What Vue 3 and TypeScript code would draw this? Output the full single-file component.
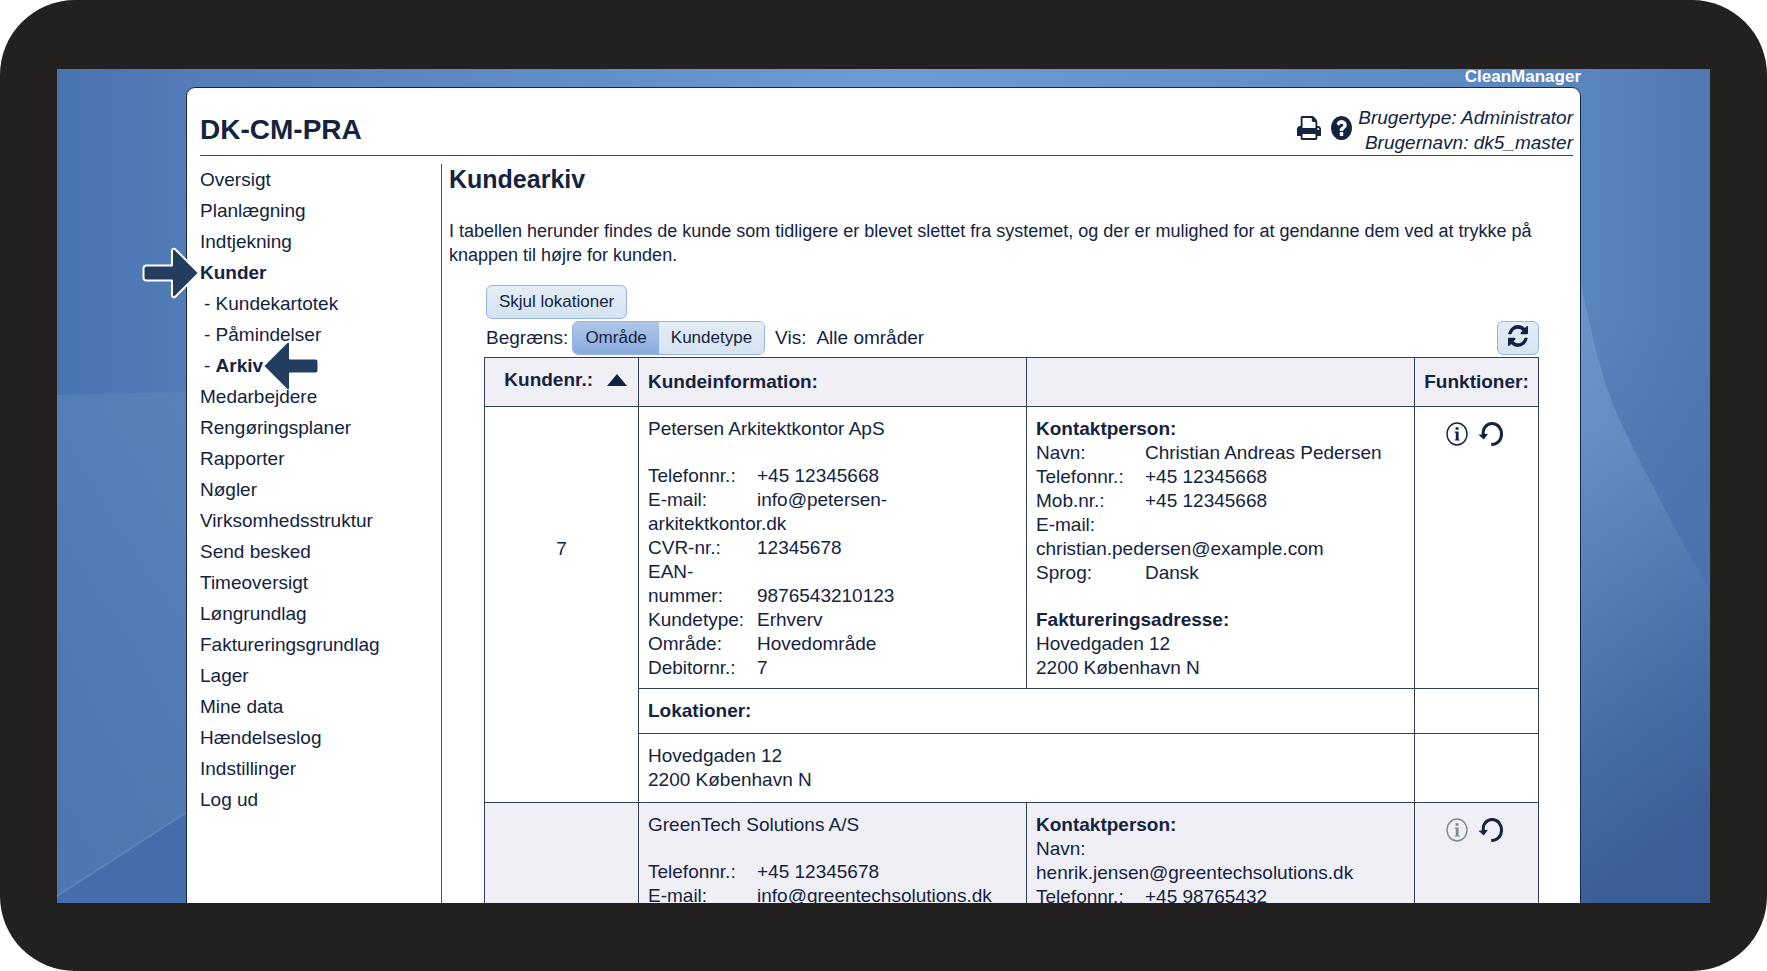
<script setup lang="ts">
import { ref } from 'vue'

interface NavItem {
  label: string
  sub?: boolean
  active?: boolean
  pointer?: 'left' | 'right'
}

interface Field {
  label: string
  value: string
}

interface Customer {
  id: string
  name: string
  info: Field[]
  contact: Field[]
  billing: string[]
  locations: string[]
  infoMuted: boolean
}

const nav: NavItem[] = [
  { label: 'Oversigt' },
  { label: 'Planlægning' },
  { label: 'Indtjekning' },
  { label: 'Kunder', active: true, pointer: 'right' },
  { label: 'Kundekartotek', sub: true },
  { label: 'Påmindelser', sub: true },
  { label: 'Arkiv', sub: true, active: true, pointer: 'left' },
  { label: 'Medarbejdere' },
  { label: 'Rengøringsplaner' },
  { label: 'Rapporter' },
  { label: 'Nøgler' },
  { label: 'Virksomhedsstruktur' },
  { label: 'Send besked' },
  { label: 'Timeoversigt' },
  { label: 'Løngrundlag' },
  { label: 'Faktureringsgrundlag' },
  { label: 'Lager' },
  { label: 'Mine data' },
  { label: 'Hændelseslog' },
  { label: 'Indstillinger' },
  { label: 'Log ud' },
]

const customers: Customer[] = [
  {
    id: '7',
    name: 'Petersen Arkitektkontor ApS',
    info: [
      { label: 'Telefonnr.:', value: '+45 12345668' },
      { label: 'E-mail:', value: 'info@petersen-arkitektkontor.dk' },
      { label: 'CVR-nr.:', value: '12345678' },
      { label: 'EAN-nummer:', value: '9876543210123' },
      { label: 'Kundetype:', value: 'Erhverv' },
      { label: 'Område:', value: 'Hovedområde' },
      { label: 'Debitornr.:', value: '7' },
    ],
    contact: [
      { label: 'Navn:', value: 'Christian Andreas Pedersen' },
      { label: 'Telefonnr.:', value: '+45 12345668' },
      { label: 'Mob.nr.:', value: '+45 12345668' },
      { label: 'E-mail:', value: 'christian.pedersen@example.com' },
      { label: 'Sprog:', value: 'Dansk' },
    ],
    billing: ['Hovedgaden 12', '2200 København N'],
    locations: ['Hovedgaden 12', '2200 København N'],
    infoMuted: false,
  },
  {
    id: '',
    name: 'GreenTech Solutions A/S',
    info: [
      { label: 'Telefonnr.:', value: '+45 12345678' },
      { label: 'E-mail:', value: 'info@greentechsolutions.dk' },
    ],
    contact: [
      { label: 'Navn:', value: 'henrik.jensen@greentechsolutions.dk' },
      { label: 'Telefonnr.:', value: '+45 98765432' },
    ],
    billing: [],
    locations: [],
    infoMuted: true,
  },
]

const filters = ['Område', 'Kundetype']
const activeFilter = ref('Område')
</script>

<template>
  <div class="device">
    <div class="screen">
      <svg class="wallpaper" viewBox="0 0 1653 834" preserveAspectRatio="none" aria-hidden="true">
        <defs>
          <linearGradient id="base" x1="0" y1="0" x2="1" y2="0">
            <stop offset="0" stop-color="#4b77b4" />
            <stop offset="0.08" stop-color="#537cb8" />
            <stop offset="0.5" stop-color="#6c9bd5" />
            <stop offset="0.92" stop-color="#5a86c0" />
            <stop offset="1" stop-color="#5078b2" />
          </linearGradient>
          <linearGradient id="leftBand" x1="0" y1="0" x2="0" y2="1">
            <stop offset="0" stop-color="#5883ba" />
            <stop offset="0.5" stop-color="#537db7" />
            <stop offset="1" stop-color="#4f79b0" />
          </linearGradient>
          <linearGradient id="leftShade" x1="0" y1="0" x2="1" y2="0">
            <stop offset="0" stop-color="#3f6aab" stop-opacity="0.2" />
            <stop offset="1" stop-color="#3f6aab" stop-opacity="0" />
          </linearGradient>
          <linearGradient id="rightShade" x1="0" y1="0" x2="0" y2="1">
            <stop offset="0.3" stop-color="#4770ac" stop-opacity="0" />
            <stop offset="0.7" stop-color="#4770ac" />
          </linearGradient>
          <linearGradient id="rightSwoop" x1="0" y1="0" x2="0.15" y2="1">
            <stop offset="0" stop-color="#6c94c8" />
            <stop offset="0.25" stop-color="#6690c3" />
            <stop offset="0.5" stop-color="#557fb6" />
            <stop offset="0.75" stop-color="#456ea6" />
            <stop offset="1" stop-color="#3a5e97" />
          </linearGradient>
        </defs>
        <rect width="1653" height="834" fill="url(#base)" />
        <path d="M0 326L130 323V834H0Z" fill="url(#leftBand)" />
        <rect width="130" height="834" fill="url(#leftShade)" />
        <path d="M0 827L130 743V834H0Z" fill="#446eab" />
        <path d="M0 827L130 743" stroke="#5985bb" stroke-width="2" />
        <rect x="1523" width="130" height="834" fill="url(#rightShade)" />
        <path d="M1523 208Q1540 300 1560 345T1653 524V834H1523Z" fill="url(#rightSwoop)" />
      </svg>

      <div class="brand">CleanManager</div>

      <div class="panel">
        <header class="top">
          <h1>DK-CM-PRA</h1>
          <div class="tools">
            <button type="button" class="icon-btn" aria-label="Udskriv">
              <svg width="24" height="24" viewBox="64 128 1664 1536" preserveAspectRatio="none">
                <path
                  fill="currentColor"
                  d="M448 1536h896v-256h-896v256zm0-640h896v-384h-160q-40 0-68-28t-28-68v-160h-640v640zm1152 64q0-26-19-45t-45-19-45 19-19 45 19 45 45 19 45-19 19-45zm128 0v416q0 13-9.500 22.500t-22.500 9.500h-224v160q0 40-28 68t-68 28h-960q-40 0-68-28t-28-68v-160h-224q-13 0-22.500-9.500t-9.500-22.500v-416q0-79 56.500-135.500t135.500-56.500h64v-544q0-40 28-68t68-28h672q40 0 88 20t76 48l152 152q28 28 48 76t20 88v256h64q79 0 135.500 56.500t56.500 135.500z"
                />
              </svg>
            </button>
            <button type="button" class="icon-btn" aria-label="Hjælp">
              <svg width="21" height="24" viewBox="128 128 1536 1536" preserveAspectRatio="none">
                <path
                  fill="currentColor"
                  d="M1024 1376v-192q0-14-9-23t-23-9h-192q-14 0-23 9t-9 23v192q0 14 9 23t23 9h192q14 0 23-9t9-23zm256-672q0-88-55.500-163t-138.500-116-170-41q-243 0-371 213-15 24 8 42l132 100q7 6 19 6 16 0 25-12 53-68 86-92 34-24 86-24 48 0 85.500 26t37.500 59q0 38-20 61t-68 45q-63 28-115.500 86.500t-52.500 125.500v36q0 14 9 23t23 9h192q14 0 23-9t9-23q0-19 21.500-49.500t54.500-49.500q32-18 49-28.500t46-35 44.500-48 28-60.500 12.500-81zm384 192q0 209-103 385.500t-279.500 279.500-385.500 103-385.500-103-279.500-279.500-103-385.500 103-385.500 279.500-279.500 385.500-103 385.500 103 279.500 279.500 103 385.500z"
                />
              </svg>
            </button>
          </div>
          <div class="user">
            <div>Brugertype: Administrator</div>
            <div>Brugernavn: dk5_master</div>
          </div>
        </header>

        <div class="body">
          <nav>
            <ul>
              <li v-for="item in nav" :key="item.label" :class="{ sub: item.sub, active: item.active }">
                <span v-if="item.sub" class="dash">- </span><a href="#">{{ item.label }}</a>
                <svg
                  v-if="item.pointer"
                  :class="['pointer', item.pointer]"
                  width="58"
                  height="52"
                  viewBox="0 0 58 52"
                  aria-hidden="true"
                >
                  <path
                    d="M4.500 18.500H30V4Q30 1 33 2L57 26L33 50Q30 51 30 48V33.500H4.500Q1.500 33.500 1.500 30.500V21.500Q1.500 18.500 4.500 18.500Z"
                    fill="#233d60"
                    stroke="#fff"
                    stroke-width="2"
                    stroke-linejoin="round"
                  />
                </svg>
              </li>
            </ul>
          </nav>

          <main>
            <h2>Kundearkiv</h2>
            <p>
              I tabellen herunder findes de kunde som tidligere er blevet slettet fra systemet, og der er
              mulighed for at gendanne dem ved at trykke på knappen til højre for kunden.
            </p>

            <div class="listing">
              <button type="button" class="btn toggle-locations">Skjul lokationer</button>
              <div class="filterbar">
                <span>Begræns:</span>
                <div class="segmented" role="group" aria-label="Begræns">
                  <button
                    v-for="f in filters"
                    :key="f"
                    type="button"
                    :class="{ on: activeFilter === f }"
                    :aria-pressed="activeFilter === f"
                    @click="activeFilter = f"
                  >
                    {{ f }}
                  </button>
                </div>
                <span>Vis:</span>
                <span>Alle områder</span>
                <button type="button" class="btn refresh" aria-label="Opdater">
                  <svg width="20" height="22" viewBox="128 128 1536 1536" preserveAspectRatio="none">
                    <path
                      fill="currentColor"
                      d="M1639 1056q0 5-1 7-64 268-268 434.500t-478 166.500q-146 0-282.500-55t-243.500-157l-129 129q-19 19-45 19t-45-19-19-45v-448q0-26 19-45t45-19h448q26 0 45 19t19 45-19 45l-137 137q71 66 161 102t187 36q134 0 250-65t186-179q11-17 53-117 8-23 30-23h192q13 0 22.500 9.500t9.500 22.500zm25-800v448q0 26-19 45t-45 19h-448q-26 0-45-19t-19-45 19-45l138-138q-148-137-349-137-134 0-250 65t-186 179q-11 17-53 117-8 23-30 23h-199q-13 0-22.500-9.500t-9.500-22.500v-7q65-268 270-434.500t480-166.500q146 0 284 55.500t245 156.500l130-129q19-19 45-19t45 19 19 45z"
                    />
                  </svg>
                </button>
              </div>

              <table>
                <colgroup>
                  <col class="c-id" />
                  <col />
                  <col />
                  <col class="c-fn" />
                </colgroup>
                <thead>
                  <tr>
                    <th class="num" scope="col">
                      <span class="sort">
                        Kundenr.:
                        <svg width="20" height="12" viewBox="0 0 20 12" aria-hidden="true">
                          <path d="M10 0L20 12H0Z" fill="currentColor" />
                        </svg>
                      </span>
                    </th>
                    <th scope="col">Kundeinformation:</th>
                    <th></th>
                    <th class="fn" scope="col">Funktioner:</th>
                  </tr>
                </thead>
                <tbody v-for="(c, i) in customers" :key="c.name" :class="{ alt: i % 2 === 1 }">
                  <tr>
                    <td class="num open">{{ c.id }}</td>
                    <td>
                      <div class="name">{{ c.name }}</div>
                      <div v-for="f in c.info" :key="f.label">
                        <span class="label">{{ f.label }}</span>{{ f.value }}
                      </div>
                    </td>
                    <td>
                      <strong>Kontaktperson:</strong>
                      <div v-for="f in c.contact" :key="f.label">
                        <span class="label">{{ f.label }}</span>{{ f.value }}
                      </div>
                      <div v-if="c.billing.length" class="billing">
                        <strong>Faktureringsadresse:</strong>
                        <div v-for="b in c.billing" :key="b">{{ b }}</div>
                      </div>
                    </td>
                    <td class="fn">
                      <div class="actions">
                        <button type="button" :class="['icon-btn', { muted: c.infoMuted }]" aria-label="Info">
                          <svg width="22" height="24" viewBox="0 0 22 24">
                            <ellipse cx="11" cy="12" rx="10" ry="11" fill="none" stroke="currentColor" stroke-width="1.400" />
                            <path
                              fill="currentColor"
                              d="M9.600 5.200h3v2.600h-3zM8.800 9.500h3.800v7.900h1v1.200h-4.800v-1.200h1v-6.700h-1z"
                            />
                          </svg>
                        </button>
                        <button type="button" class="icon-btn" aria-label="Gendan">
                          <svg width="26" height="26" viewBox="0 0 26 26">
                            <path
                              d="M5.500 14.500C4 7 9 2.500 14 2.500C20 2.500 23.500 7.500 23.500 13C23.500 19 19.500 23.600 13.200 23.600"
                              fill="none"
                              stroke="currentColor"
                              stroke-width="3"
                            />
                            <path d="M0.500 13.800L10 12.800L5.800 18.500Z" fill="currentColor" />
                          </svg>
                        </button>
                      </div>
                    </td>
                  </tr>
                  <template v-if="c.locations.length">
                    <tr class="location">
                      <td class="open"></td>
                      <td colspan="2"><strong>Lokationer:</strong></td>
                      <td></td>
                    </tr>
                    <tr class="location">
                      <td></td>
                      <td colspan="2">
                        <div v-for="l in c.locations" :key="l">{{ l }}</div>
                      </td>
                      <td></td>
                    </tr>
                  </template>
                </tbody>
              </table>
            </div>
          </main>
        </div>
      </div>
    </div>
  </div>
</template>

<style>
body {
  margin: 0;
  background: #fff;
}
</style>

<style scoped>
.device {
  box-sizing: border-box;
  height: 100vh;
  padding: 69px 57px 68px;
  border-radius: 75px;
  background: #22211f;
  color: #14233f;
  font-family: 'Liberation Sans', Arial, sans-serif;
  font-size: 19px;
  line-height: 24px;
}

.screen {
  position: relative;
  height: 100%;
  overflow: hidden;
}

.wallpaper {
  position: absolute;
  inset: 0;
  width: 100%;
  height: 100%;
}

.brand {
  position: relative;
  height: 18px;
  margin: 0 129px;
  color: #fff;
  font-size: 17px;
  font-weight: 700;
  line-height: 16px;
  text-align: right;
}

.panel {
  position: relative;
  display: flex;
  flex-direction: column;
  min-height: 100%;
  margin: 0 129px;
  border: 1px solid #14284b;
  border-radius: 9px;
  background: #fff;
}

.top {
  display: flex;
  align-items: center;
  margin: 0 7px 0 13px;
  padding-top: 17px;
  border-bottom: 1px solid #35435c;
}

h1 {
  flex: 1;
  margin: 0;
  font-size: 28px;
  line-height: 32px;
}

.tools {
  display: flex;
  gap: 10px;
  margin-right: 6px;
  padding-bottom: 4px;
}

.icon-btn {
  display: block;
  padding: 0;
  border: 0;
  background: none;
  color: inherit;
  cursor: pointer;
}

.icon-btn svg {
  display: block;
}

.icon-btn.muted {
  opacity: 0.5;
}

.user {
  font-style: italic;
  line-height: 25px;
  text-align: right;
}

.body {
  flex: 1;
  display: grid;
  grid-template-columns: 241px minmax(0, 1fr);
  padding: 8px 7px 0 13px;
}

nav ul {
  margin: 0;
  padding: 0;
  list-style: none;
}

nav li {
  position: relative;
  width: max-content;
  line-height: 31px;
}

nav li.sub {
  padding-left: 4px;
}

nav .dash {
  white-space: pre;
}

nav a {
  color: inherit;
  text-decoration: none;
}

nav .active a {
  font-weight: 700;
}

.pointer {
  position: absolute;
  top: -10px;
}

.pointer.right {
  right: 100%;
}

.pointer.left {
  left: 100%;
  margin-left: -1px;
  transform: scaleX(-1);
}

main {
  padding-left: 7px;
  border-left: 1px solid #4a566c;
}

h2 {
  margin: 0 0 25px;
  font-size: 25px;
  line-height: 30px;
}

p {
  margin: 0;
  font-size: 18px;
}

.listing {
  margin: 18px 34px 0 35px;
}

.btn {
  box-sizing: border-box;
  height: 34px;
  border: 1px solid #94b4e4;
  border-radius: 6px;
  background: linear-gradient(#e5edf6, #d5e3f2);
  color: inherit;
  font-family: inherit;
  font-size: 17px;
  cursor: pointer;
}

.toggle-locations {
  display: block;
  margin-left: 2px;
  padding: 0 12px;
}

.filterbar {
  display: flex;
  align-items: center;
  gap: 10px;
  margin: 2px 0 2px 2px;
}

.segmented {
  display: flex;
  box-sizing: border-box;
  height: 34px;
  margin-left: -6px;
  border: 1px solid #94b4e4;
  border-radius: 6px;
  overflow: hidden;
}

.segmented button {
  padding: 0 12px;
  border: 0;
  background: linear-gradient(#e5edf6, #d5e3f2);
  color: inherit;
  font-family: inherit;
  font-size: 17px;
  cursor: pointer;
}

.segmented button.on {
  background: linear-gradient(#afc6e9, #89aade);
}

.refresh {
  width: 42px;
  margin-left: auto;
  padding: 0 10px 4px;
}

.refresh svg {
  display: block;
}

table {
  width: 100%;
  border-collapse: collapse;
  table-layout: fixed;
}

.c-id {
  width: 154px;
}

.c-fn {
  width: 124px;
}

th,
td {
  padding: 10px 9px 8px;
  border: 1px solid #2f3f5c;
  text-align: left;
  vertical-align: top;
}

th {
  height: 31px;
  padding: 8px 9px 9px;
  background: #f0eff6;
  vertical-align: middle;
}

.location td {
  padding-bottom: 10px;
}

.alt td {
  background: #f0eff6;
}

.num {
  text-align: center;
  vertical-align: middle;
}

.open {
  border-bottom-color: transparent;
  border-bottom-style: hidden;
}

.sort {
  display: flex;
  align-items: center;
  justify-content: flex-end;
  gap: 14px;
  padding: 0 2px 4px 0;
}

.fn {
  padding-right: 0;
  padding-left: 0;
  text-align: center;
}

.name {
  padding-bottom: 23px;
}

.label {
  display: inline-block;
  width: 109px;
}

.billing {
  padding-top: 23px;
}

strong {
  display: block;
}

.actions {
  display: flex;
  align-items: center;
  justify-content: center;
  gap: 10px;
  padding: 4px 4px 0 0;
}
</style>
